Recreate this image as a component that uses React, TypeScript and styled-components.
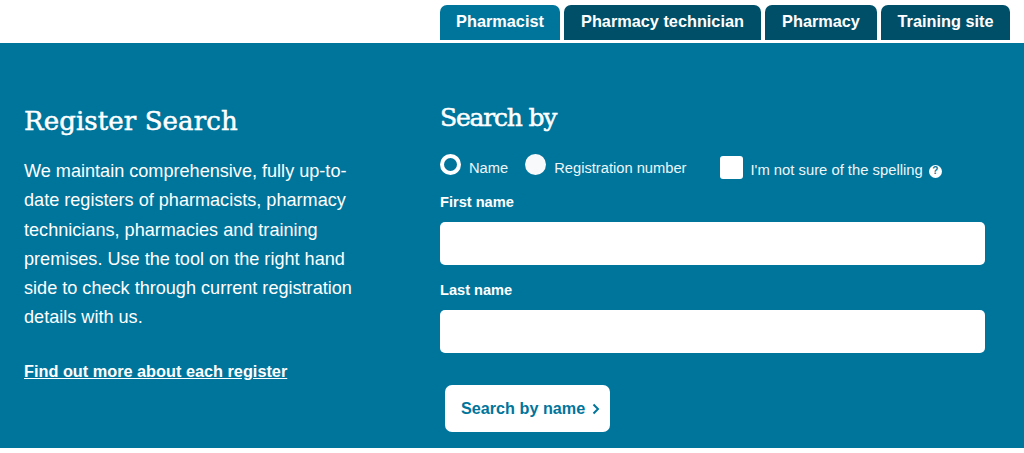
import React from "react";
import styled, { createGlobalStyle } from "styled-components";

const GlobalStyle = createGlobalStyle`
  html, body {
    margin: 0;
    padding: 0;
    background: #fff;
    font-family: "Liberation Sans", Arial, sans-serif;
  }
`;

const Page = styled.div`
  width: 1024px;
  height: 453px;
  overflow: hidden;
  background: #fff;
`;

const Tabs = styled.nav`
  display: flex;
  gap: 4px;
  height: 43px;
  padding: 5px 0 0 440px;
  box-sizing: border-box;
`;

const Tab = styled.a<{ $active?: boolean; $width: number }>`
  display: flex;
  justify-content: center;
  align-items: center;
  width: ${(p) => p.$width}px;
  height: 35px;
  padding-bottom: 2px;
  box-sizing: border-box;
  border-radius: 7px 7px 0 0;
  background: ${(p) => (p.$active ? "#00759c" : "#004f69")};
  color: #fff;
  font-size: 16.3px;
  font-weight: 700;
`;

const Banner = styled.section`
  display: flex;
  height: 405px;
  background: #00759c;
  color: #fff;
  box-sizing: border-box;
`;

const Intro = styled.div`
  width: 440px;
  padding: 61px 0 0 24px;
  box-sizing: border-box;
`;

const Heading = styled.h2<{ $size: number; $spacing: number }>`
  margin: 0;
  font-family: "DejaVu Serif", "Liberation Serif", serif;
  font-weight: 400;
  font-size: ${(p) => p.$size}px;
  line-height: 34px;
  letter-spacing: ${(p) => p.$spacing}px;
  -webkit-text-stroke: 0.5px #fff;
`;

const IntroText = styled.p`
  width: 335px;
  margin: 19px 0 0;
  font-size: 18.1px;
  line-height: 29.3px;
`;

const MoreLink = styled.a`
  display: block;
  margin-top: 28px;
  color: #fff;
  font-size: 16.3px;
  font-weight: 700;
  line-height: 20px;
  text-decoration: underline;
`;

const SearchForm = styled.form`
  width: 545px;
  padding-top: 58px;
  box-sizing: border-box;
`;

const Options = styled.div`
  display: flex;
  align-items: flex-start;
  height: 40px;
  margin-top: 19px;
`;

const Radio = styled.span<{ $checked?: boolean }>`
  flex: none;
  width: 21px;
  height: 21px;
  box-sizing: border-box;
  border-radius: 50%;
  background: ${(p) => (p.$checked ? "#00759c" : "#f7f9fb")};
  border: ${(p) => (p.$checked ? "4px solid #fff" : "none")};
`;

const OptionLabel = styled.span<{ $gap: number }>`
  margin: 6px ${(p) => p.$gap}px 0 8px;
  font-size: 14.7px;
  line-height: 16px;
  color: #eef6f9;
  white-space: nowrap;
`;

const Checkbox = styled.span`
  flex: none;
  width: 23px;
  height: 23px;
  margin-top: 2px;
  border-radius: 3px;
  background: #fff;
`;

const CheckLabel = styled.span`
  display: flex;
  align-items: center;
  gap: 6px;
  margin: 8px 0 0 7px;
  font-size: 14.8px;
  line-height: 16px;
  color: #eef6f9;
  white-space: nowrap;
`;

const HelpIcon = styled.span`
  display: inline-flex;
  justify-content: center;
  align-items: center;
  width: 13px;
  height: 13px;
  margin-top: 2px;
  border-radius: 50%;
  background: #fff;
  color: #00759c;
  font-size: 10px;
  font-weight: 700;
  line-height: 1;
`;

const Field = styled.label`
  display: block;
  margin-bottom: 17px;
  font-size: 14.6px;
  font-weight: 700;
  line-height: 17px;
`;

const TextInput = styled.input`
  display: block;
  width: 100%;
  height: 43px;
  margin-top: 11px;
  padding: 0 10px;
  box-sizing: border-box;
  border: none;
  border-radius: 5px;
  background: #fff;
`;

const SubmitButton = styled.button`
  display: flex;
  align-items: center;
  gap: 7px;
  width: 165px;
  height: 47px;
  margin: 32px 0 0 5px;
  padding: 0 0 0 16px;
  box-sizing: border-box;
  border: none;
  border-radius: 7px;
  background: #fff;
  color: #00759c;
  font-family: "Liberation Sans", Arial, sans-serif;
  font-size: 16.2px;
  font-weight: 700;
`;

const App: React.FC = () => {
  return (
    <Page>
      <GlobalStyle />
      <Tabs>
        <Tab $active $width={120}>Pharmacist</Tab>
        <Tab $width={197}>Pharmacy technician</Tab>
        <Tab $width={112}>Pharmacy</Tab>
        <Tab $width={129}>Training site</Tab>
      </Tabs>
      <Banner>
        <Intro>
          <Heading $size={26} $spacing={0.1}>Register Search</Heading>
          <IntroText>
            We maintain comprehensive, fully up-to-date registers of pharmacists, pharmacy
            technicians, pharmacies and training premises. Use the tool on the right hand side to
            check through current registration details with us.
          </IntroText>
          <MoreLink>Find out more about each register</MoreLink>
        </Intro>
        <SearchForm onSubmit={(e) => e.preventDefault()}>
          <Heading $size={25} $spacing={-1.2}>Search by</Heading>
          <Options>
            <Radio $checked />
            <OptionLabel $gap={17}>Name</OptionLabel>
            <Radio />
            <OptionLabel $gap={34}>Registration number</OptionLabel>
            <Checkbox />
            <CheckLabel>
              I'm not sure of the spelling
              <HelpIcon>?</HelpIcon>
            </CheckLabel>
          </Options>
          <Field>
            First name
            <TextInput type="text" />
          </Field>
          <Field>
            Last name
            <TextInput type="text" />
          </Field>
          <SubmitButton type="submit">
            Search by name
            <svg width="8" height="12" viewBox="0 0 8 12" fill="none" stroke="#00759c" strokeWidth="2">
              <path d="M1.5 1.5 6 6l-4.5 4.5" />
            </svg>
          </SubmitButton>
        </SearchForm>
      </Banner>
    </Page>
  );
};

export default App;
